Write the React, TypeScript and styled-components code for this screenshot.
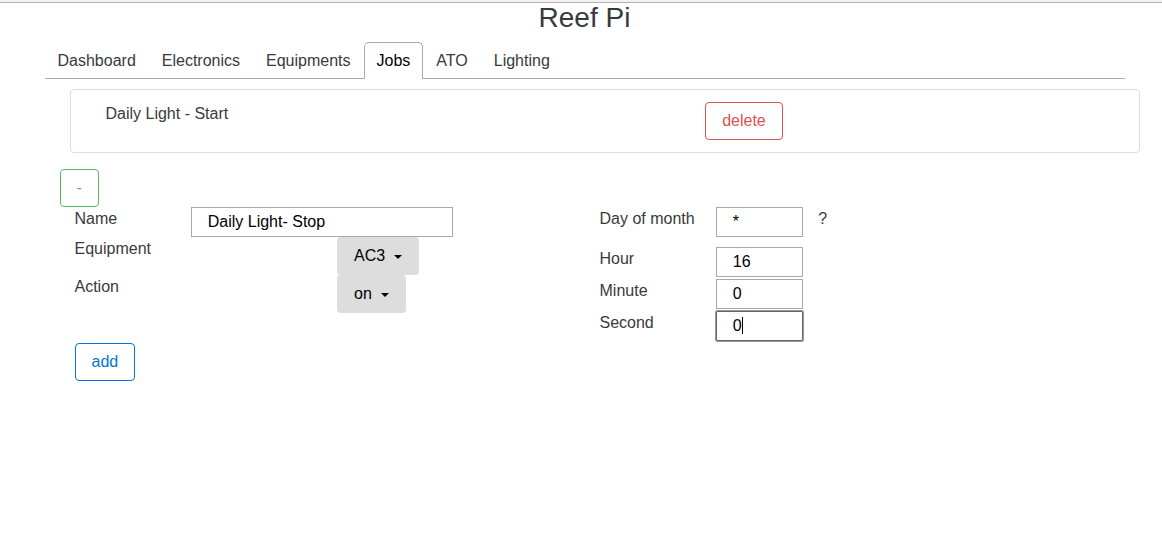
import { useEffect, useId, useRef, useState } from 'react';
import styled, { createGlobalStyle, css } from 'styled-components';

const GlobalStyle = createGlobalStyle`
  *, *::before, *::after { box-sizing: border-box; }
  body {
    margin: 0;
    background: #fff;
    color: #373a3c;
    font: 16px/24px "Liberation Sans", Arial, sans-serif;
  }
  button, input, select { font: inherit; margin: 0; }
`;

const TopEdge = styled.div`
  height: 3px;
  background: #f2f1f0;
  border-bottom: 1px solid #b6b4b2;
`;

const Page = styled.div`
  padding: 0 22px 0 29px;
`;

const Container = styled.main`
  max-width: 1110px;
  margin: 0 auto;
`;

const Title = styled.h1`
  margin: 0;
  font-size: 28px;
  line-height: 30px;
  font-weight: 400;
  text-align: center;
`;

const TabBar = styled.nav`
  display: flex;
  margin: 9px 15px 0;
  border-bottom: 1px solid #aaa;
`;

const Tab = styled.a<{ $active?: boolean }>`
  margin-bottom: -1px;
  padding: 6px 12px;
  border: 1px solid transparent;
  border-bottom: 0;
  border-radius: 5px 5px 0 0;
  color: #373a3c;
  text-decoration: none;
  ${({ $active }) => $active && css`
    color: #000;
    background: #fff;
    border-color: #aaa;
  `}
`;

const JobList = styled.ul`
  margin: 10px 0 16px 40px;
  padding: 0;
  list-style: none;
`;

const JobItem = styled.li`
  display: grid;
  grid-template-columns: 7fr 5fr;
  align-items: start;
  padding: 12px 20px;
  border: 1px solid #ddd;
  border-radius: 4px;
`;

const Cell = styled.div`
  padding: 0 15px;
`;

const OutlineButton = styled.button<{ $color: string }>`
  display: block;
  height: 38px;
  padding: 0 16px;
  border: 1px solid ${({ $color }) => $color};
  border-radius: 4px;
  background: #fff;
  color: ${({ $color }) => $color};
  cursor: pointer;
`;

const JobEditor = styled.section`
  margin: 0 30px;
`;

const JobForm = styled.form`
  display: grid;
  grid-template-columns: 1fr 1fr;
`;

const FormRow = styled.div<{ $height: number }>`
  display: grid;
  grid-template-columns: repeat(12, 1fr);
  align-items: start;
  min-height: ${({ $height }) => $height}px;
`;

const Label = styled.label`
  grid-column: 1 / span 3;
  padding-left: 15px;
  white-space: nowrap;
`;

const InputSlot = styled.div<{ $span: number }>`
  position: relative;
  grid-column: 4 / span ${({ $span }) => $span};
`;

const TextInput = styled.input`
  display: block;
  width: 100%;
  height: 30px;
  padding: 0 16px;
  border: 1px solid #a9a9a9;
  border-radius: 0;
  background: #fff;
  color: #000;
  &:focus {
    border-color: #666;
    border-radius: 1px;
    outline: 1px solid #999;
    outline-offset: 0;
    caret-color: transparent;
  }
`;

const Caret = styled.span`
  position: absolute;
  top: 6px;
  left: 26px;
  width: 1px;
  height: 17px;
  background: #000;
  pointer-events: none;
`;

const Help = styled.span`
  padding-left: 15px;
`;

const SelectSlot = styled.div`
  grid-column: 7 / span 6;
  display: flex;
  align-items: center;
  padding-left: 15px;
`;

const Select = styled.select`
  appearance: none;
  field-sizing: content;
  height: 38px;
  padding: 0 34px 0 17px;
  border: 0;
  border-radius: 4px;
  background: #ddd;
  color: #000;
  cursor: pointer;
`;

const Arrow = styled.svg`
  width: 8px;
  height: 4px;
  margin: 2px 0 0 -25px;
  pointer-events: none;
`;

const Actions = styled.div`
  padding-left: 15px;
`;

const TABS = ['Dashboard', 'Electronics', 'Equipments', 'Jobs', 'ATO', 'Lighting'];

type FieldProps = { label: string; initial: string; span?: number; height?: number; help?: string; focused?: boolean };

function Field({ label, initial, span = 2, height = 32, help, focused }: FieldProps) {
  const id = useId();
  const ref = useRef<HTMLInputElement>(null);
  const [value, setValue] = useState(initial);
  useEffect(() => {
    if (focused) ref.current?.focus();
  }, [focused]);
  return (
    <FormRow $height={height}>
      <Label htmlFor={id}>{label}</Label>
      <InputSlot $span={span}>
        <TextInput id={id} ref={ref} type="text" value={value} onChange={(e) => setValue(e.target.value)} />
        {focused && value === initial && <Caret />}
      </InputSlot>
      {help && <Help>{help}</Help>}
    </FormRow>
  );
}

function Dropdown({ label, options }: { label: string; options: string[] }) {
  const id = useId();
  return (
    <FormRow $height={38}>
      <Label htmlFor={id}>{label}</Label>
      <SelectSlot>
        <Select id={id}>
          {options.map((o) => <option key={o}>{o}</option>)}
        </Select>
        <Arrow viewBox="0 0 8 4" aria-hidden="true"><path d="M0 0H8L4 4Z" fill="#000" /></Arrow>
      </SelectSlot>
    </FormRow>
  );
}

export default function App() {
  return (
    <>
      <GlobalStyle />
      <TopEdge />
      <Page>
        <Container>
          <Title>Reef Pi</Title>
          <TabBar>
            {TABS.map((name) => (
              <Tab key={name} href="#" $active={name === 'Jobs'}>{name}</Tab>
            ))}
          </TabBar>
          <JobList>
            <JobItem>
              <Cell>Daily Light - Start</Cell>
              <Cell><OutlineButton type="button" $color="#d9534f">delete</OutlineButton></Cell>
            </JobItem>
          </JobList>
          <JobEditor>
            <OutlineButton type="button" $color="#5cb85c">-</OutlineButton>
            <JobForm onSubmit={(e) => e.preventDefault()}>
              <div>
                <Field label="Name" initial="Daily Light- Stop" span={6} height={30} />
                <Dropdown label="Equipment" options={['AC3']} />
                <Dropdown label="Action" options={['on', 'off']} />
              </div>
              <div>
                <Field label="Day of month" initial="*" height={40} help="?" />
                <Field label="Hour" initial="16" />
                <Field label="Minute" initial="0" />
                <Field label="Second" initial="0" focused />
              </div>
              <Actions>
                <OutlineButton type="submit" $color="#0275d8">add</OutlineButton>
              </Actions>
            </JobForm>
          </JobEditor>
        </Container>
      </Page>
    </>
  );
}
